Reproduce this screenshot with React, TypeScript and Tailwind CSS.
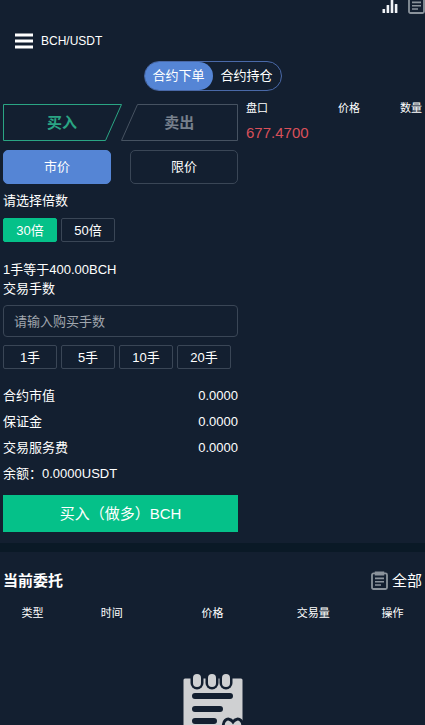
import React, { useState } from "react";
import clsx from "clsx";

type IChipProps = {
  label: string;
  active?: boolean;
  onClick: () => void;
};

const fees = [
  { label: "合约市值", value: "0.0000" },
  { label: "保证金", value: "0.0000" },
  { label: "交易服务费", value: "0.0000" },
];

function MenuIcon() {
  return (
    <svg width="18" height="16" viewBox="0 0 18 16" fill="none" stroke="#fff" strokeWidth="3">
      <path d="M0 2h18M0 8h18M0 14h18" />
    </svg>
  );
}

function BarsIcon() {
  return (
    <svg width="16" height="14" viewBox="0 0 16 14" fill="#f1f4f8">
      <rect x="0.5" y="9" width="2.6" height="4" rx="0.5" />
      <rect x="4.6" y="5" width="2.6" height="8" rx="0.5" />
      <rect x="8.7" y="0" width="2.6" height="13" rx="0.5" />
      <rect x="12.8" y="4" width="2.6" height="9" rx="0.5" />
    </svg>
  );
}

function ClipboardIcon({ className }: { className?: string }) {
  return (
    <svg className={className} width="17" height="20" viewBox="0 0 17 20" fill="none" stroke="#8b939c" strokeWidth="1.8">
      <rect x="1" y="2.4" width="15" height="15.6" rx="1.5" />
      <path d="M4.5 1.2h8v2.6h-8z" strokeWidth="1.5" />
      <path d="M4 7.4h9M4 10.7h9M4 14h6" strokeWidth="1.6" />
    </svg>
  );
}

function NotepadIcon() {
  return (
    <svg width="60" height="74" viewBox="0 0 60 74">
      <path d="M2 7h56v60a4 4 0 0 1-4 4H6a4 4 0 0 1-4-4z" fill="#cfd0d2" stroke="#cfd0d2" strokeWidth="3" strokeLinejoin="round" />
      {[14, 29, 43].map((x) => (
        <g key={x} strokeLinecap="round">
          <path d={`M${x} 5v5`} stroke="#131f30" strokeWidth="13" />
          <path d={`M${x} 5v5`} stroke="#cfd0d2" strokeWidth="8" />
        </g>
      ))}
      <path d="M12 23h35M12 36h25M12 48h19" stroke="#131f30" strokeWidth="6" strokeLinecap="round" />
      <path
        d="M50 66L42 57c-5-8 3-15 8-8 5-7 13 0 8 8z"
        fill="#cfd0d2"
        stroke="#131f30"
        strokeWidth="3"
      />
    </svg>
  );
}

function Chip({ label, active, onClick }: IChipProps) {
  return (
    <button
      type="button"
      onClick={onClick}
      className={clsx(
        "h-6 w-[54px] rounded-xs border text-[13px] leading-none",
        active ? "border-[#05c189] bg-[#05c189]" : "border-[#3a4656]"
      )}
    >
      {label}
    </button>
  );
}

const App = () => {
  const [view, setView] = useState("order");
  const [side, setSide] = useState("buy");
  const [priceType, setPriceType] = useState("market");
  const [lever, setLever] = useState(30);
  const [lots, setLots] = useState("");

  return (
    <div className="min-h-screen overflow-hidden bg-[#131f30] font-['Liberation_Sans','Noto_Sans_CJK_SC',sans-serif] text-[13px] text-white">
      <header>
        <div className="flex h-[15px] items-end justify-end gap-[10px] overflow-hidden">
          <button type="button" aria-label="K线" className="pb-px">
            <BarsIcon />
          </button>
          <button type="button" aria-label="委托记录">
            <ClipboardIcon />
          </button>
        </div>
        <div className="flex h-[46px] items-center gap-2 px-[15px] pt-[6px]">
          <button type="button" aria-label="菜单">
            <MenuIcon />
          </button>
          <h1 className="text-xs">BCH/USDT</h1>
        </div>
      </header>

      <div className="flex justify-center">
        <div className="flex h-[30px] rounded-full border border-[#4a69a8]">
          <button
            type="button"
            onClick={() => setView("order")}
            className={clsx("w-[68px] rounded-full", view === "order" && "bg-[#5585d5]")}
          >
            合约下单
          </button>
          <button
            type="button"
            onClick={() => setView("position")}
            className={clsx("w-[68px] rounded-full", view === "position" && "bg-[#5585d5]")}
          >
            合约持仓
          </button>
        </div>
      </div>

      <main className="flex gap-2 pl-[3px]">
        <section className="flex w-[235px] shrink-0 flex-col pt-[13px]">
          {/* buy / sell */}
          <div className="flex h-[37px] text-[15px] font-bold">
            <button
              type="button"
              onClick={() => setSide("buy")}
              className={clsx("grid w-1/2 place-items-center", side === "buy" ? "text-[#2aa583]" : "text-[#77808c]")}
            >
              <svg className="col-start-1 row-start-1 overflow-visible" width="118" height="37" fill="none" stroke="currentColor">
                <path d="M.5.5h118l-16 36H.5z" />
              </svg>
              <span className="col-start-1 row-start-1 pt-0.5">买入</span>
            </button>
            <button
              type="button"
              onClick={() => setSide("sell")}
              className={clsx("grid w-1/2 place-items-center", side === "sell" ? "text-[#2aa583]" : "text-[#77808c]")}
            >
              <svg className="col-start-1 row-start-1 overflow-visible" width="117" height="37" fill="none" stroke={side === "sell" ? "#2aa583" : "#465261"}>
                <path d="M16.5.5h100v36H.5z" />
              </svg>
              <span className="col-start-1 row-start-1 pt-0.5">卖出</span>
            </button>
          </div>

          <div className="mt-[9px] flex justify-between">
            <button
              type="button"
              onClick={() => setPriceType("market")}
              className={clsx(
                "h-[34px] w-[108px] rounded-[5px] border",
                priceType === "market" ? "border-[#5585d5] bg-[#5585d5]" : "border-[#3a4656]"
              )}
            >
              市价
            </button>
            <button
              type="button"
              onClick={() => setPriceType("limit")}
              className={clsx(
                "h-[34px] w-[108px] rounded-[5px] border",
                priceType === "limit" ? "border-[#5585d5] bg-[#5585d5]" : "border-[#3a4656]"
              )}
            >
              限价
            </button>
          </div>

          <p className="mt-2 leading-[18px]">请选择倍数</p>
          <div className="mt-2 flex gap-1">
            {[30, 50].map((n) => (
              <Chip key={n} label={`${n}倍`} active={lever === n} onClick={() => setLever(n)} />
            ))}
          </div>

          <p className="mt-[18px] leading-[19px]">1手等于400.00BCH</p>
          <label htmlFor="lots" className="leading-[19px]">
            交易手数
          </label>
          <input
            id="lots"
            value={lots}
            onChange={(e) => setLots(e.target.value)}
            placeholder="请输入购买手数"
            className="mt-[7px] h-8 w-full rounded-[4px] border border-[#3a4656] bg-transparent px-[10px] outline-none placeholder:text-[#a0a6ae]"
          />
          <div className="mt-2 flex gap-1">
            {[1, 5, 10, 20].map((n) => (
              <Chip key={n} label={`${n}手`} onClick={() => setLots(String(n))} />
            ))}
          </div>

          <dl className="mt-[14px]">
            {fees.map((fee) => (
              <div key={fee.label} className="flex justify-between leading-[26px]">
                <dt>{fee.label}</dt>
                <dd>{fee.value}</dd>
              </div>
            ))}
          </dl>
          <p className="leading-[26px]">余额：0.0000USDT</p>

          <button type="button" className="mt-2 mb-[11px] h-[37px] bg-[#05c189] pt-0.5 text-[15px]">
            买入（做多）BCH
          </button>
        </section>

        {/* order book */}
        <section className="flex-1 pt-2">
          <div className="pr-[3px]">
            <table className="w-full table-fixed text-[11px]">
              <thead>
                <tr className="h-[18px]">
                  <th className="w-[39%] text-left font-normal">盘口</th>
                  <th className="w-[39%] text-center font-normal">价格</th>
                  <th className="text-right font-normal">数量</th>
                </tr>
              </thead>
            </table>
          </div>
          <p className="mt-[6px] text-[15px] leading-5 text-[#d9505a]">677.4700</p>
        </section>
      </main>

      <div className="h-[9px] bg-[#0a1926]" />

      <section className="pt-[18px]">
        <div className="flex h-[22px] items-center justify-between px-[3px] text-[15px]">
          <h2 className="font-bold">当前委托</h2>
          <a href="#all" className="flex items-center gap-1">
            <ClipboardIcon />
            全部
          </a>
        </div>
        <table className="mt-3 w-full table-fixed text-[11px]">
          <thead>
            <tr className="h-[18px]">
              <th className="w-[65px] font-normal">类型</th>
              <th className="w-[22%] font-normal">时间</th>
              <th className="font-normal">价格</th>
              <th className="w-[22%] font-normal">交易量</th>
              <th className="w-[65px] font-normal">操作</th>
            </tr>
          </thead>
        </table>
        <div className="mt-[51px] flex justify-center">
          <NotepadIcon />
        </div>
      </section>
    </div>
  );
};

export default App;
